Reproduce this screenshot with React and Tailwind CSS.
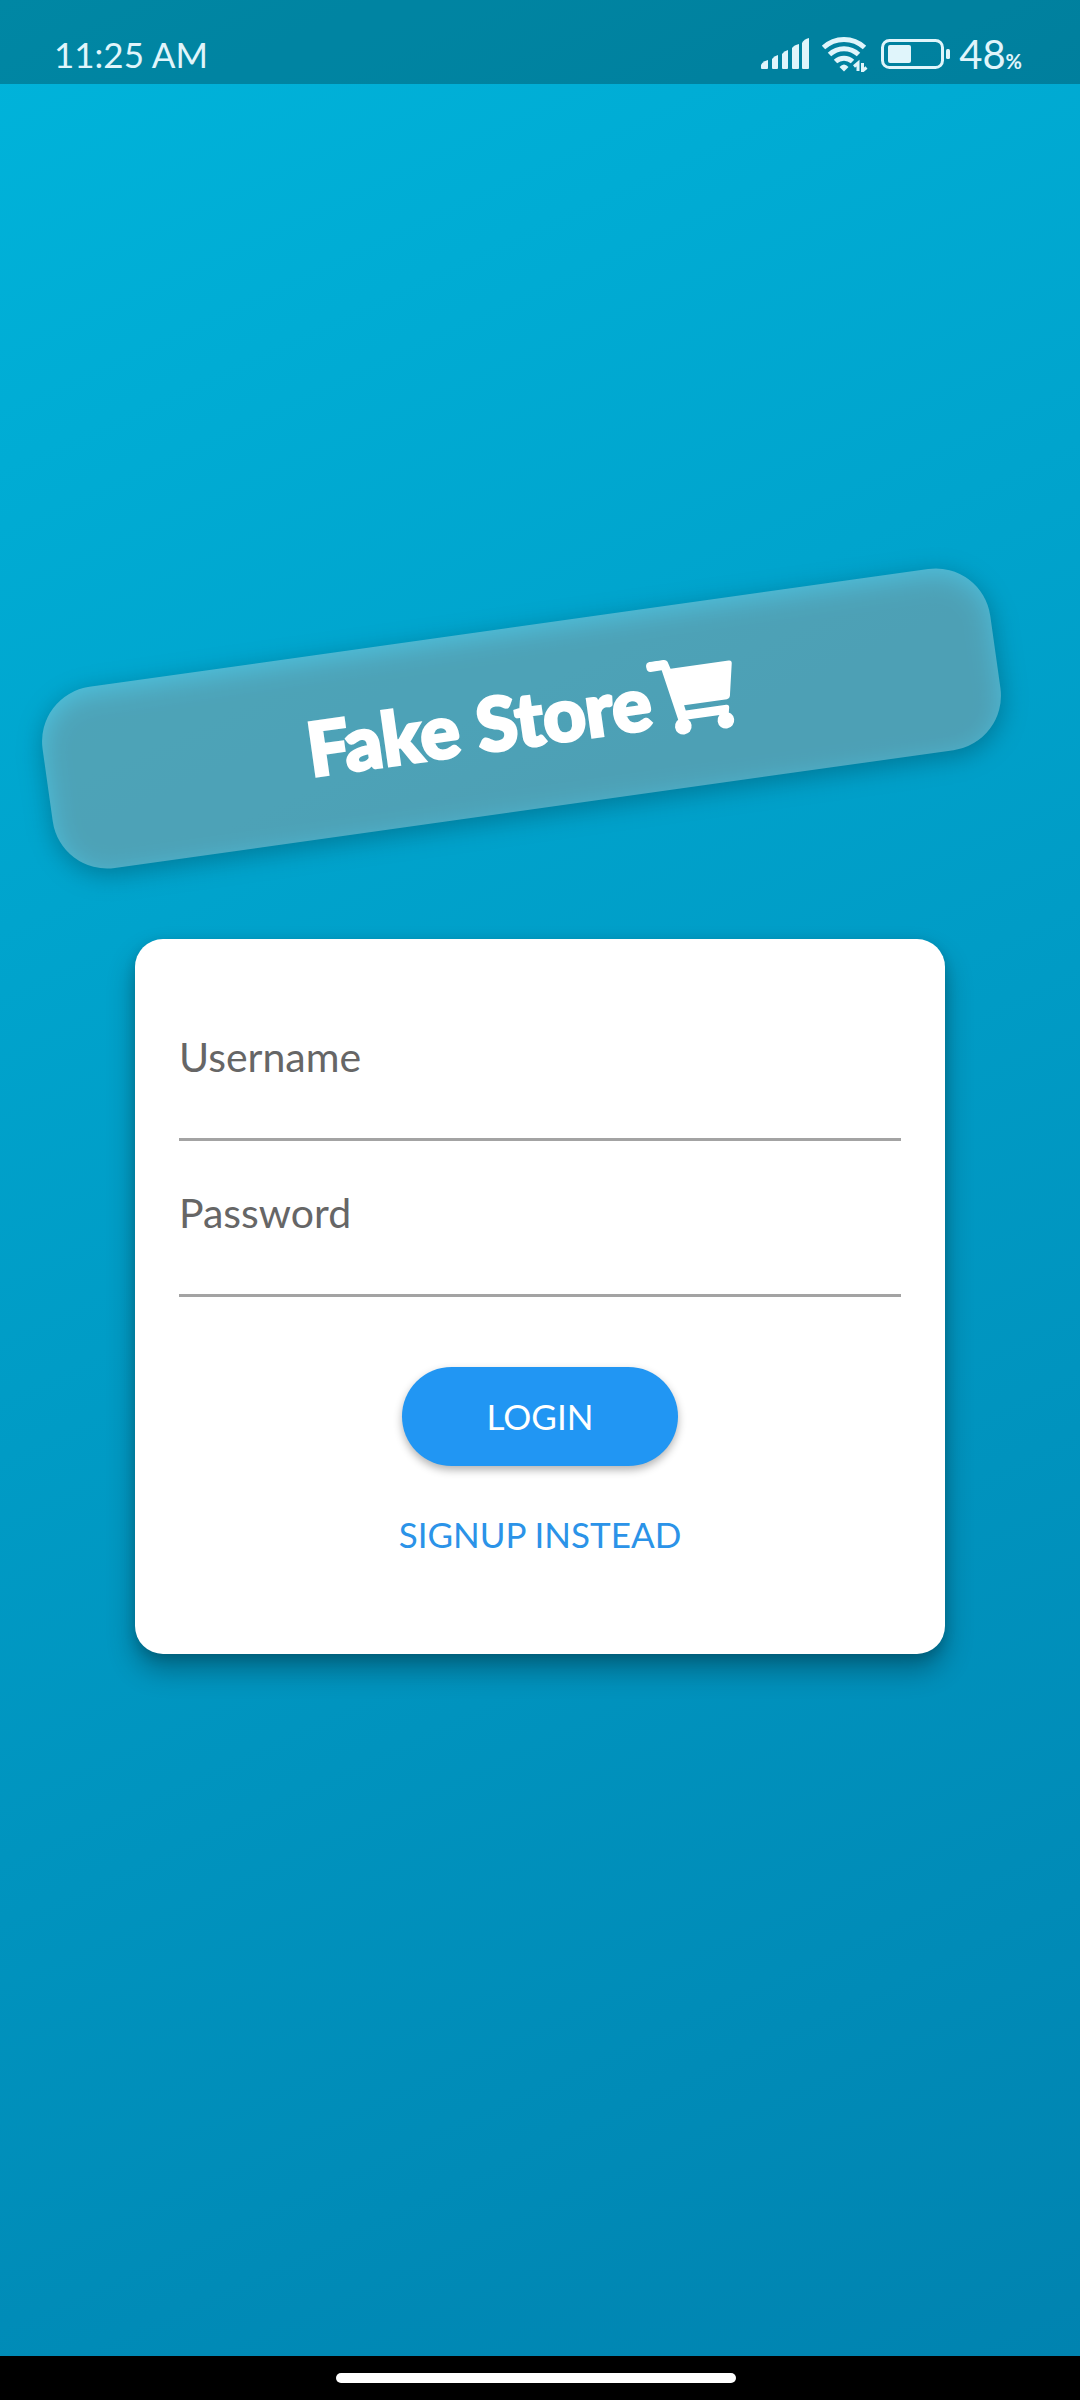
import React from "react";

function SignalIcon() {
  return (
    <svg className="w-12 h-8" viewBox="0 0 48 32" fill="currentColor" aria-hidden="true">
      <path d="M0 30v-3q2-4 7-5v8q0 1-1 1H1q-1 0-1-1z" />
      <path d="M11 30v-9q2-3 6-4v13q0 1-1 1h-4q-1 0-1-1z" />
      <path d="M21 30V16q2-3 6-4v18q0 1-1 1h-4q-1 0-1-1z" />
      <path d="M31 30V10q2-3 7-4v24q0 1-1 1h-5q-1 0-1-1z" />
      <path d="M41 30V5q2-4 7-5v30q0 1-1 1h-5q-1 0-1-1z" />
    </svg>
  );
}

function WifiIcon() {
  return (
    <svg className="w-12 h-9" viewBox="0 0 48 36" fill="none" stroke="currentColor" aria-hidden="true">
      <path d="M2.5 11.5a30 30 0 0 1 41 0" strokeWidth="5" />
      <path d="M8.5 18.5a21 21 0 0 1 29 0" strokeWidth="5" />
      <path d="M14.5 25.5a12.500 12.500 0 0 1 17 0" strokeWidth="5" />
      <path d="M18.5 31q4.500-5 9 0L23 35.500z" fill="currentColor" stroke="none" />
      <path d="M37 35V27l-4 3.500M41.500 27v8l4-3.500" strokeWidth="3" />
    </svg>
  );
}

function BatteryIcon() {
  return (
    <svg className="w-[70px] h-[30px]" viewBox="0 0 70 30" fill="none" aria-hidden="true">
      <rect x="1.5" y="1.5" width="60" height="27" rx="7" stroke="currentColor" strokeWidth="3" />
      <rect x="7" y="6" width="23" height="18" rx="2" fill="currentColor" />
      <rect x="65" y="10" width="4" height="10" rx="1.5" fill="currentColor" />
    </svg>
  );
}

function CartIcon() {
  return (
    <svg className="w-[86px] h-[78px] shrink-0" viewBox="-2 0 258 234" fill="currentColor" aria-hidden="true">
      <path d="M10 1H52Q61 1 64 8L70 30H246Q256 30 254 40L235 136Q233 144 225 144H95L98 160H220Q230 160 228 170L224 188H72L43 31H10Q-2 30-2 16Q-2 2 10 1z" />
      <circle cx="84" cy="206" r="25" />
      <circle cx="213" cy="206" r="25" />
    </svg>
  );
}

function StatusBar() {
  return (
    <header className="flex h-[84px] shrink-0 items-center justify-between bg-black/25 pt-6 pl-[54px] pr-[58px] text-[#e0f5fb]">
      <span className="text-[35px] leading-10">11:25 AM</span>
      <div className="flex items-center gap-3">
        <SignalIcon />
        <WifiIcon />
        <div className="flex items-center gap-2">
          <BatteryIcon />
          <span className="text-[40px] leading-10">
            48<span className="text-xl font-bold">%</span>
          </span>
        </div>
      </div>
    </header>
  );
}

function Banner() {
  return (
    <div className="relative mr-[38px] h-[183px] w-[957px] max-w-full -rotate-8">
      <div className="absolute inset-0 translate-y-[6px] rounded-[55px] bg-black/26 blur-[13px]" />
      <div className="relative flex h-full items-center justify-center rounded-[55px] bg-white/30 text-white">
        <h1 className="text-[74px] leading-none font-black [-webkit-text-stroke:3px_white] [stroke-linejoin:round]">
          Fake Store
        </h1>
        <CartIcon />
      </div>
    </div>
  );
}

function Field({ id, label, type }) {
  return (
    <div className="relative">
      <label htmlFor={id} className="absolute top-12 left-0 text-[41px] leading-12 text-[#666666]">
        {label}
      </label>
      <input
        id={id}
        type={type}
        className="block h-[156px] w-full border-b-3 border-[#a3a3a3] bg-transparent pt-12 text-[41px] outline-none"
      />
    </div>
  );
}

function LoginCard() {
  return (
    <form
      onSubmit={(e) => e.preventDefault()}
      className="flex w-3/4 flex-col rounded-[28px] bg-white px-11 pt-[46px] pb-24 shadow-[0_16px_28px_rgba(0,0,0,0.3),0_4px_12px_rgba(0,0,0,0.15)]"
    >
      <Field id="username" label="Username" type="text" />
      <Field id="password" label="Password" type="password" />
      <button
        type="submit"
        className="mt-[70px] h-[99px] w-[276px] self-center rounded-full bg-[#2196f3] text-[35px] text-white shadow-[0_4px_8px_rgba(0,0,0,0.3)]"
      >
        LOGIN
      </button>
      <button type="button" className="mt-11 self-center text-[35px] leading-12 text-[#2b93e8]">
        SIGNUP INSTEAD
      </button>
    </form>
  );
}

export default function App() {
  return (
    <div className="flex min-h-screen flex-col bg-black font-['Lato',sans-serif]">
      <div className="flex flex-1 flex-col bg-[linear-gradient(155.4deg,#00b4db,#0083b0)]">
        <StatusBar />
        <main className="flex flex-1 flex-col items-center justify-center gap-[129px] overflow-hidden pb-40">
          <Banner />
          <LoginCard />
        </main>
      </div>
      <footer className="flex h-11 shrink-0 items-center justify-center bg-black pr-2">
        <div className="h-[10px] w-[400px] rounded-full bg-white" />
      </footer>
    </div>
  );
}
